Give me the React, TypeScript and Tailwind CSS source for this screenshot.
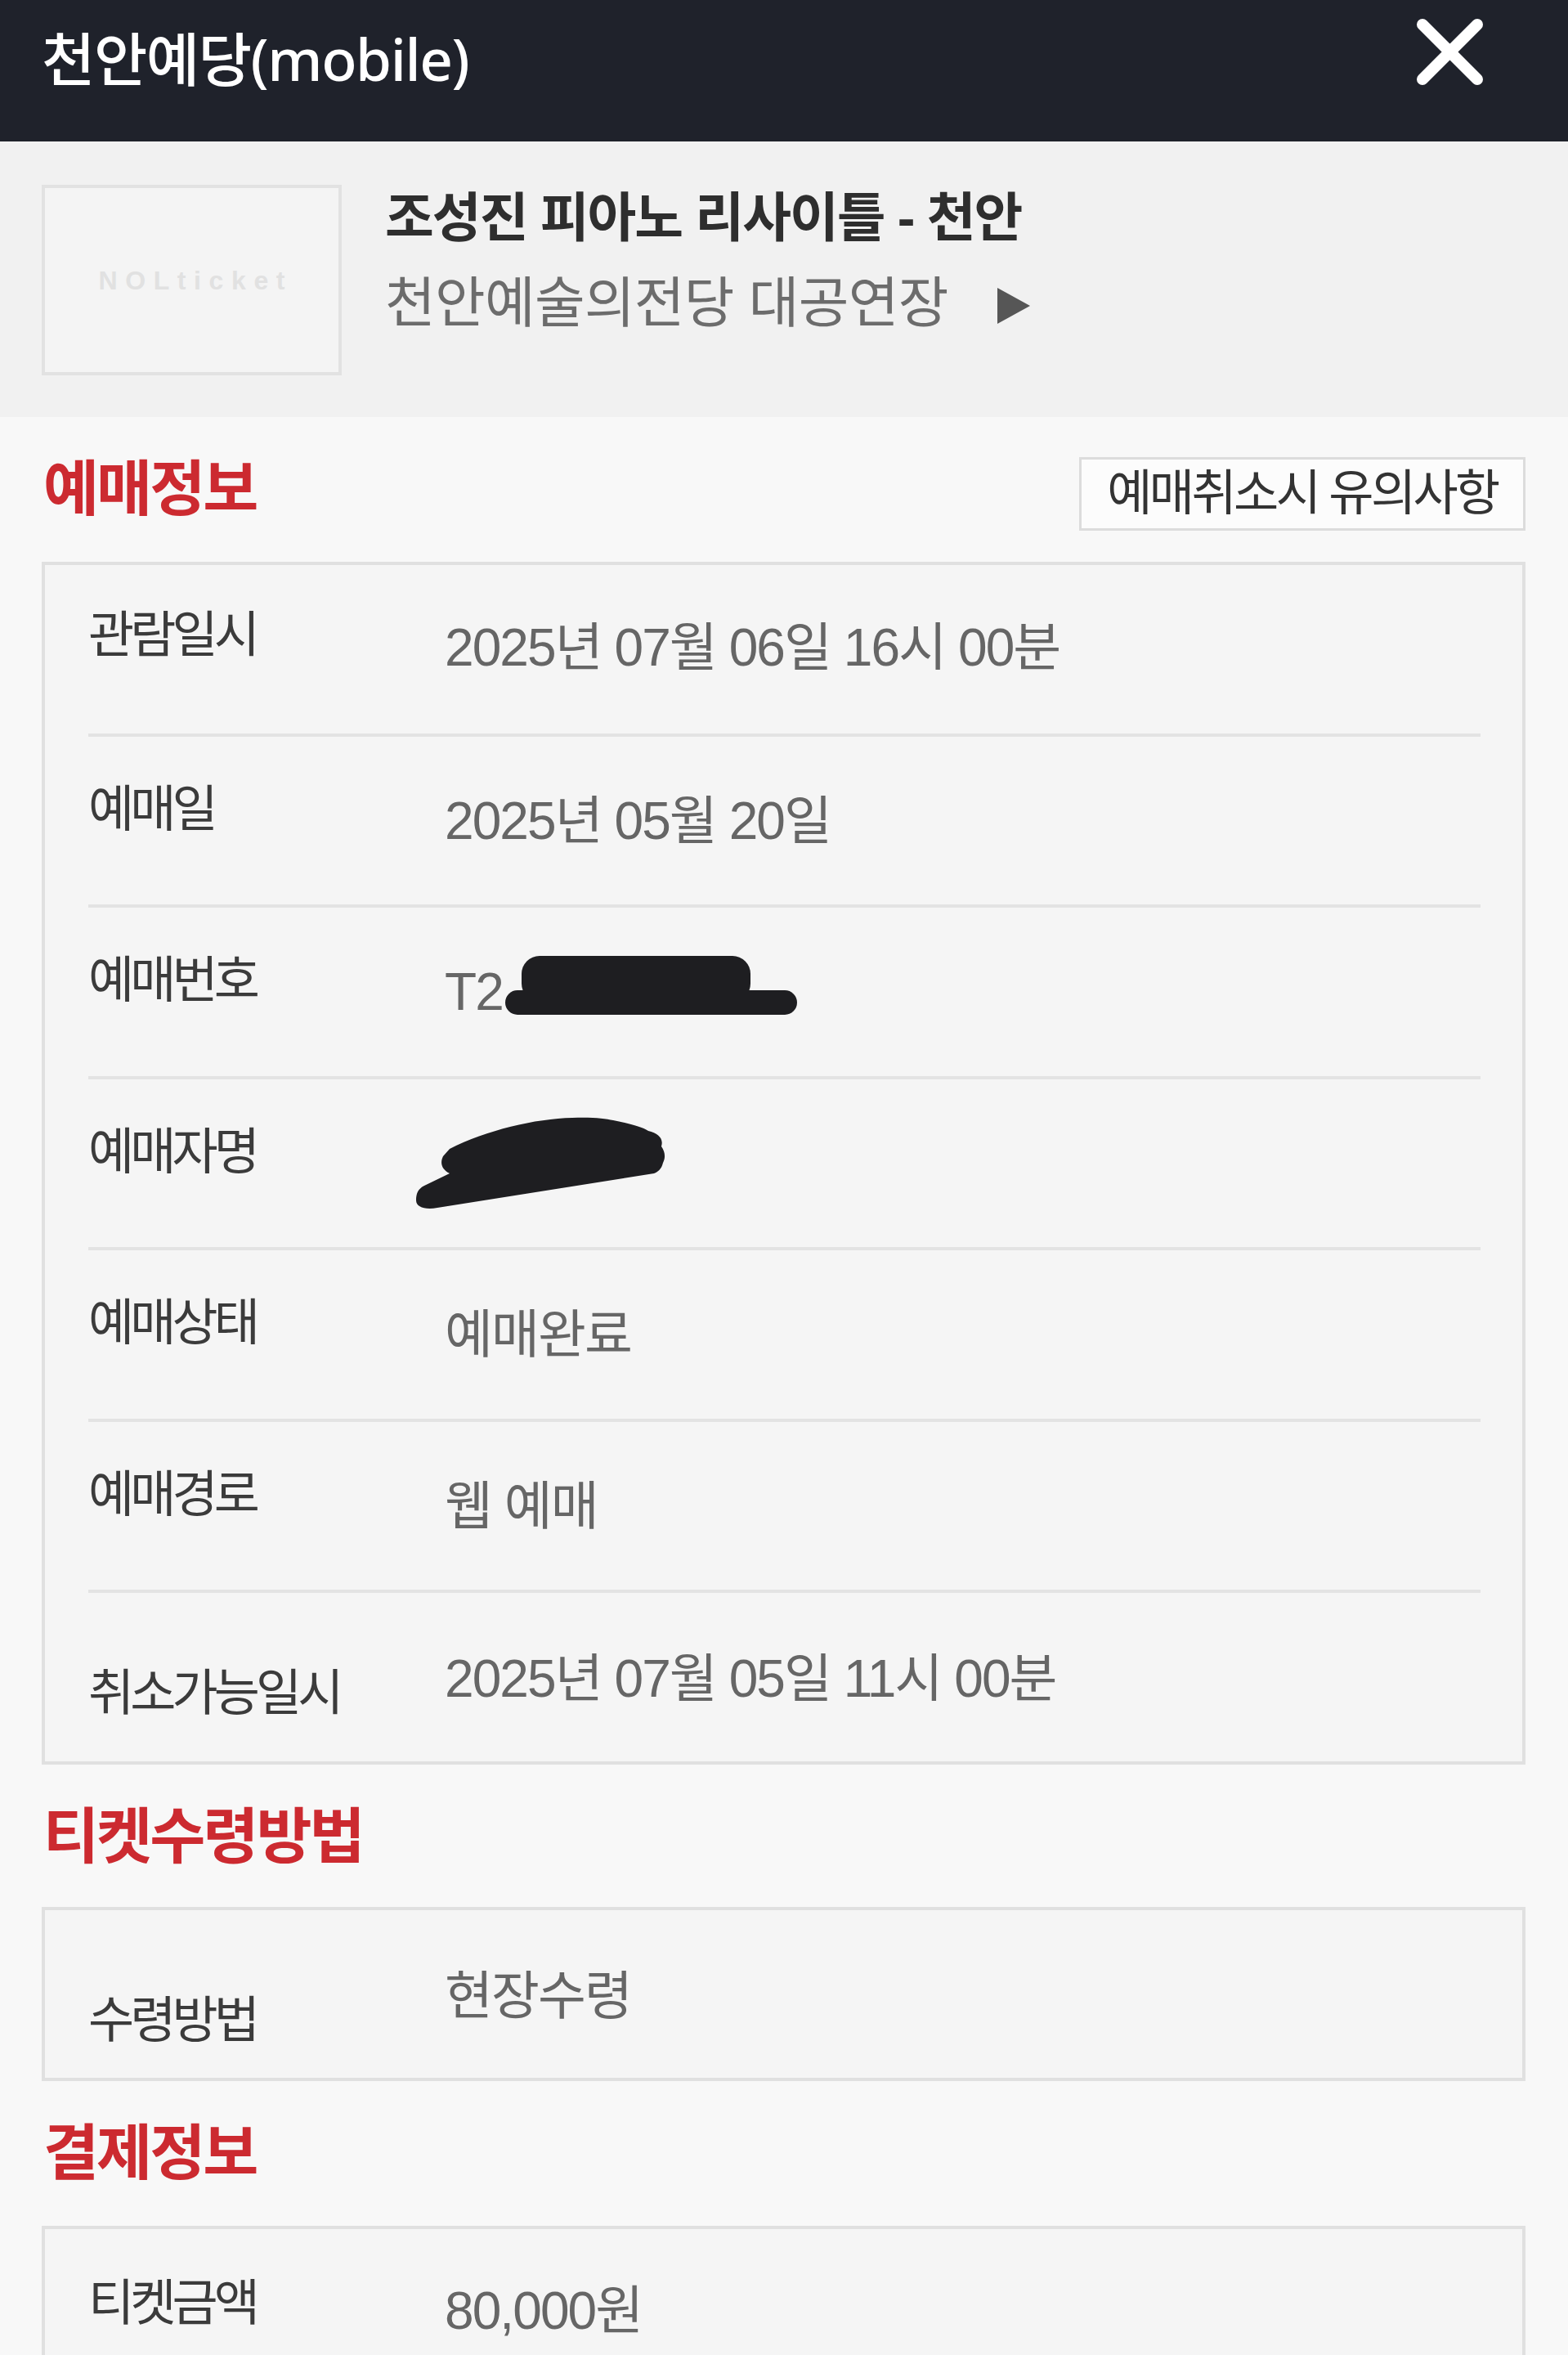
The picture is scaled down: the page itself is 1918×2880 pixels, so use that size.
import React from "react";

type RowProps = {
  label: string;
  lmt: string;
  vmt: string;
  h?: string;
  children: React.ReactNode;
};

function Row({ label, lmt, vmt, h = "h-[205.5px]", children }: RowProps) {
  return (
    <div className={`flex items-start ${h}`}>
      <div className={`w-[436px] shrink-0 text-[61px] leading-none tracking-[-0.08em] text-[#3b3b3b] ${lmt}`}>
        {label}
      </div>
      <div className={`relative text-[64px] leading-none tracking-[-0.03em] text-[#666666] ${vmt}`}>
        {children}
      </div>
    </div>
  );
}

function Divider() {
  return <div className="h-[4px] bg-[#e3e3e3]" />;
}

function Heading({ children }: { children: React.ReactNode }) {
  return (
    <div className="text-[74px] leading-none font-bold tracking-[-0.04em] text-[#cc2a30] mt-[52px]">
      {children}
    </div>
  );
}

export default function App() {
  return (
    <div className="w-full h-[2880px] overflow-hidden bg-[#f8f8f8] font-['Liberation_Sans','Noto_Sans_CJK_KR',sans-serif]">
      {/* top bar */}
      <header className="h-[173px] bg-[#1f222b] flex items-start justify-between pl-[51px] pr-[103px]">
        <div className="mt-[36px] text-[71px] leading-none font-medium text-white tracking-[-0.02em] font-['Noto_Sans','Noto_Sans_CJK_KR',sans-serif]">
          천안예당(mobile)
        </div>
        <svg className="mt-[22px]" width="83" height="83" viewBox="0 0 83 83">
          <path d="M8 8 L75 75 M75 8 L8 75" stroke="#ffffff" strokeWidth="14" strokeLinecap="round" fill="none" />
        </svg>
      </header>

      {/* event summary */}
      <section className="h-[337px] bg-[#f1f1f1] flex items-start pl-[51px] pt-[53px]">
        <div className="w-[367px] h-[233px] border-4 border-[#e2e2e2] bg-[#f4f4f4] flex items-center justify-center shrink-0">
          <span className="pl-[0.3em] text-[32px] leading-none font-bold tracking-[0.3em] text-[#e1e1e1] font-['Liberation_Sans',sans-serif]">
            NOLticket
          </span>
        </div>
        <div className="ml-[53px] flex flex-col">
          <div className="mt-[8px] text-[65px] leading-none font-bold tracking-[-0.03em] text-[#2e2e2e]">
            조성진 피아노 리사이틀 - 천안
          </div>
          <div className="mt-[38px] flex items-center text-[67px] leading-none text-[#6c6c6c] tracking-[-0.01em]">
            <span>천안예술의전당 대공연장</span>
            <svg className="ml-[58px] mt-[6px]" width="44" height="48" viewBox="0 0 44 48">
              <polygon points="2,2 42,24 2,46" fill="#565656" />
            </svg>
          </div>
        </div>
      </section>

      {/* 예매정보 */}
      <div className="h-[177px] flex items-start justify-between pl-[53px] pr-[52px]">
        <Heading>예매정보</Heading>
        <div className="mt-[49px] w-[546px] h-[90px] border-[3px] border-[#dcdcdc] bg-[#fcfcfc] flex items-center justify-center text-[60px] leading-none tracking-[-0.06em] text-[#333333]">
          예매취소시 유의사항
        </div>
      </div>

      <div className="ml-[51px] w-[1815px] border-4 border-[#e0e0e0] bg-[#f5f5f5] pl-[53px] pr-[51px]">
        <Row label="관람일시" lmt="mt-[56px]" vmt="mt-[69px]">
          2025년 07월 06일 16시 00분
        </Row>
        <Divider />
        <Row label="예매일" lmt="mt-[59px]" vmt="mt-[71px]">
          2025년 05월 20일
        </Row>
        <Divider />
        <Row label="예매번호" lmt="mt-[59px]" vmt="mt-[71px]">
          <span>T2</span>
          <svg className="absolute left-[74px] top-[-14px]" width="358" height="76" viewBox="0 0 358 76">
            <rect x="20" y="2" width="280" height="56" rx="22" fill="#1e1e21" />
            <rect x="0" y="44" width="357" height="30" rx="15" fill="#1e1e21" />
          </svg>
        </Row>
        <Divider />
        <Row label="예매자명" lmt="mt-[59px]" vmt="mt-[71px]">
          <span className="opacity-0">홍길동</span>
          <svg className="absolute left-[-39px] top-[-27px]" width="312" height="118" viewBox="0 0 312 118">
            <path
              d="M45 41 C90 18 150 4 195 3 C220 2 235 4 245 6 C265 10 280 14 288 19 C300 22 307 28 304 38 C309 45 309 52 306 58 C304 66 300 69 295 71 L30 113 C15 116 4 112 4 104 C4 96 6 90 14 86 L45 71 C35 66 33 58 37 50 Z"
              fill="#1e1e21"
            />
          </svg>
        </Row>
        <Divider />
        <Row label="예매상태" lmt="mt-[59px]" vmt="mt-[71px]">
          예매완료
        </Row>
        <Divider />
        <Row label="예매경로" lmt="mt-[59px]" vmt="mt-[71px]">
          웹 예매
        </Row>
        <Divider />
        <Row label="취소가능일시" lmt="mt-[93px]" vmt="mt-[73px]">
          2025년 07월 05일 11시 00분
        </Row>
      </div>

      {/* 티켓수령방법 */}
      <div className="h-[174px] flex items-start pl-[53px]">
        <Heading>티켓수령방법</Heading>
      </div>
      <div className="ml-[51px] w-[1815px] border-4 border-[#e0e0e0] bg-[#f5f5f5] pl-[53px] pr-[51px]">
        <Row label="수령방법" lmt="mt-[105px]" vmt="mt-[73px]">
          현장수령
        </Row>
      </div>

      {/* 결제정보 */}
      <div className="h-[177px] flex items-start pl-[53px]">
        <Heading>결제정보</Heading>
      </div>
      <div className="ml-[51px] w-[1815px] border-4 border-[#e0e0e0] bg-[#f5f5f5] pl-[53px] pr-[51px]">
        <Row label="티켓금액" lmt="mt-[61px]" vmt="mt-[68px]">
          80,000원
        </Row>
      </div>
    </div>
  );
}
